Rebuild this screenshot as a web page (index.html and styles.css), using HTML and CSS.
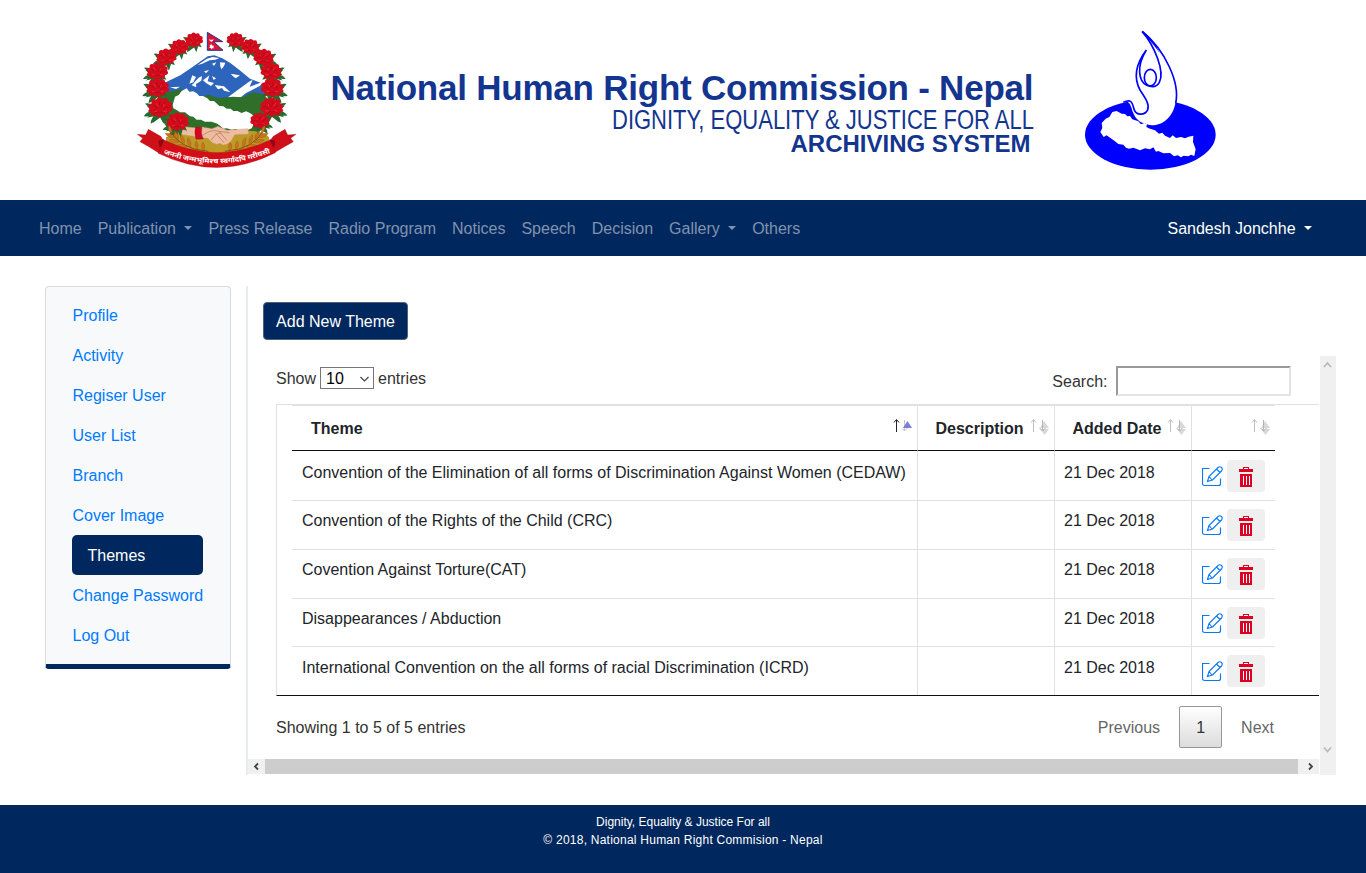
FILE: index.html
```html
<!DOCTYPE html>
<html lang="en">
<head>
<meta charset="utf-8">
<title>National Human Right Commission - Nepal</title>
<link rel="stylesheet" href="styles.css">
</head>
<body>
<svg class="defs" width="0" height="0">
  <defs>
    <g id="flower">
      <path fill="#246b2c" d="M-17 8l-17 15 22-5-8 18 19-14 8 16 6-20 12 3-8-15zM-20-3l-15-4 14 14zM-20 6q-15 1-22 13 17 2 26-7zM-12 14q-13 9-13 24 13-6 19-20zM-18-8q-10-8-21-5 8 11 20 10z"/>
      <path fill="#d20c1c" d="M-28 1q-8-11 5-14-2-14 12-10 6-10 16-2 13-5 14 7 14 2 8 13 8 11-6 13-2 13-14 8-9 11-17 1-14 4-14-7-12-1-4-9z"/>
      <path fill="none" stroke="#9c0512" stroke-width="1.500" d="M-18-8q7 1 9 9M-2-18q-4 9 5 13m10-11q-10 3-9 13m17 0q-10-3-15 5m3 11q-5-8-13-3m-15 5q7-9 14-7"/>
      <path fill="none" stroke="#f23641" stroke-width="2" d="M-12-14l6 8M9-12l-3 7M-16 8l8-2M15 6l-8 1"/>
    </g>
    <g id="wheat" fill="#cc741c" stroke="#8a4a10" stroke-width="1">
      <path fill="none" stroke-width="3" d="M118 312Q145 372 235 379"/>
      <path d="M116 301q14 12 8 25-12-10-8-25M106 325q19-2 25 13-18 1-25-13M134 318q14 11 11 25-14-9-11-25M118 345q19-6 30 7-18 7-30-7M153 329q14 14 9 27-14-12-9-27M139 361q20-8 33 5-18 8-33-5M174 338q13 14 7 28-13-12-7-28M163 375q20-9 35 1-17 10-35-1M198 348q11 13 3 25-11-11-3-25M188 383q18-10 36-5-17 12-36 5M219 352q10 13 1 25-10-12-1-25"/>
    </g>
    <g id="sort-both" fill="none">
      <path stroke="#bebec0" d="M4.500 14V2M2 4.500l2.500-3 2.500 3"/>
      <path fill="#d8d8da" d="M15 3l5 7h-9zM11 11h9l-4.500 6z"/>
      <path stroke="#b4b4b8" d="M13.500 2v11M10.500 10l3 3 3-3"/>
    </g>
    <g id="edit-icon" fill="none" stroke="#0878f9" stroke-width="1.150">
      <path d="M7.500 2.500h-7v15q0 2 2 2h14q2 0 2-2v-5"/>
      <path d="M5.500 15.500l1.500-5L16 1.500q2-1.500 3.500 0t0 3.500l-9 9zM7 10.500l3 3.500M14.500 3l3.500 3.500"/>
    </g>
    <g id="trash-icon">
      <path fill="#dc0022" d="M4 0h6v2h4v3H0V2h4zM1 7h12v13H1z"/>
      <path stroke="#fff" d="M4.500 9v9M7.500 9v9M10.500 9v9M5 1.500h4"/>
      <path stroke="#efefef" d="M0 6h14"/>
    </g>
  </defs>
</svg>

<header class="banner">
  <svg class="emblem" viewBox="0 0 525 450" role="img" aria-label="Emblem of Nepal">
    <path fill="#2d64bc" d="M98 176l53-25 42-29 40-28 20-3 24 9 25 15 30 23 28 23 35 14 13 34-20 30H116z"/>
    <path fill="#fff" d="M203 120l28-19 17-5 20 3-12 5-17 2-22 10zM246 116l13-4-7 11zM270 112l16 1-4 10-7 10-4-8zM222 139l15-4-9 10zM246 153l12 7-7 5zM302 146l28 5-13 9-8-6zM187 151l-9 25 12-4 8-16zM206 158l10-5-2 14-16 10 1 10-14-6zM219 166l19-15-5 18 19 5-9 9-14-8zM120 187l30-2-12 7zM254 180l28 4 19 18-19-5-6-8-12 4zM295 216l24-18 38-28 11-6-9 21 42-15-12 13-41 21-19 16-20 2-18 5z"/>
    <path fill="#2e7029" d="M87 211l22-10 45-8 26 5 31 18 25-7 28 10 45-4 27 2 34-15 32 5 14 20-6 72-46 45H135l-45-68z"/>
    <path fill="#fff" d="M128 240L135 215 146 210 155 198 170 190 178 200 190 199 200 205 208 213 219 213 232 220 240 228 252 228 268 243 280 244 290 251 302 251 310 258 322 258 335 264 348 259 360 264 368 270 370 290 368 308 355 314 345 312 335 320 318 312 305 314 290 310 280 311 272 304 262 296 245 290 225 290 213 284 200 284 190 275 180 274 165 262 150 262 140 255 130 250z"/>
    <path fill="#bd9a27" d="M108 337q22-12 54-10l97-4 100-5q40-1 58 19l-1 20q-150 80-308-5z"/>
    <path fill="#edbda0" stroke="#d38c78" d="M148 304l55 5 14-3 29 5 18-7 27 12 63-5 2 16-42 2-12 21-12 8-11 2-9-5-10 3-13-5-13-13-24-3-65-10z"/>
    <path fill="none" stroke="#b86d60" stroke-width="2" d="M218 331q26-20 48-12l32 4m-42 0l26 30m-15-34l24 28m-47-2q15-24 30-20"/>
    <path fill="#d20720" stroke="#8d0719" d="M197 306l19 1q-5 19 4 35l-22 1q-6-22-1-37z"/>
    <use href="#flower" transform="translate(193 48) scale(.88)"/><use href="#flower" transform="translate(149 69) scale(.92)"/>
    <use href="#flower" transform="translate(110 99) scale(1)"/><use href="#flower" transform="translate(83 142) scale(1.050)"/>
    <use href="#flower" transform="translate(84 192) scale(1.120)"/><use href="#flower" transform="translate(92 251) scale(1.200)"/>
    <use href="#flower" transform="translate(144 294) scale(1.100)"/>
    <use href="#flower" transform="translate(316 48) scale(-.88 .88)"/><use href="#flower" transform="translate(360 68) scale(-.92 .92)"/>
    <use href="#flower" transform="translate(400 100) scale(-1 1)"/><use href="#flower" transform="translate(423 142) scale(-1.050 1.050)"/>
    <use href="#flower" transform="translate(426 192) scale(-1.120 1.120)"/><use href="#flower" transform="translate(424 250) scale(-1.150 1.150)"/>
    <use href="#flower" transform="translate(389 290) scale(-.95 .95)"/>
    <use href="#wheat"/><use href="#wheat" transform="translate(520 0) scale(-1 1)"/>
    <path fill="#d81438" stroke="#23368d" stroke-width="3" d="M232 22l46 28h-27l28 26h-47z"/>
    <path fill="#fff" d="M237 41q7 7 14 0-2 9-7 9t-7-9M245 58l2 4 5 0-2 4 2 4-5 0-3 3-2-4-5-1 3-3-1-4z"/>
    <path fill="#cf1019" stroke="#8e0711" d="M22 328L47 330 55 313 92 334 103 350 88 385 58 366 30 350 38 340zM498 328L473 330 465 313 430 334 418 350 433 383 462 366 490 350 482 340z"/>
    <path fill="#8f0710" d="M85 347L102 343 100 362 88 367zM436 347L419 343 421 362 433 367z"/>
    <path fill="#d40d17" stroke="#8e0711" d="M102 345Q262 421 420 345L436 383Q262 471 85 385z"/>
    <path id="ribbon-line" fill="none" d="M97 385Q262 447 428 381"/>
    <text class="motto"><textPath href="#ribbon-line" textLength="328" lengthAdjust="spacingAndGlyphs" startOffset="4">जननी जन्मभूमिश्च स्वर्गादपि गरीयसी</textPath></text>
  </svg>
  <svg class="titles" viewBox="0 0 710 100" role="img" aria-label="National Human Right Commission - Nepal">
    <text class="title-main" x="2.500" y="40" textLength="703">National Human Right Commission - Nepal</text>
    <text class="title-tag" x="284" y="69" textLength="422" lengthAdjust="spacingAndGlyphs">DIGNITY, EQUALITY &amp; JUSTICE FOR ALL</text>
    <text class="title-sub" x="462.500" y="92" textLength="240" lengthAdjust="spacingAndGlyphs">ARCHIVING SYSTEM</text>
  </svg>
  <svg class="logo" viewBox="0 0 450 465" role="img" aria-label="Commission logo">
    <ellipse cx="226" cy="338" rx="196" ry="105" fill="#00f"/>
    <path fill="#fff" d="M203 30C270 75 300 158 304 215C304 275 272 309 230 310Q220 310 209 304C191 300 180 288 172 266C166 244 159 237 151 239L145 228L189 180L184 137L214 84z"/>
    <path fill="#fff" d="M76 330L82 318 80 303 92 290 103 285 112 270 125 267 140 275 150 276 157 283 165 282 172 292 190 298 198 307 208 303 216 306 214 315 225 320 240 325 252 335 262 332 270 341 285 348 293 340 303 348 318 345 330 349 341 344 355 341 354 360 362 382 358 402 348 398 340 403 326 401 318 406 308 400 297 403 285 393 265 394 250 387 243 389 235 376 225 382 210 379 195 385 175 377 162 380 153 377 145 368 130 366 118 356 105 347 95 340 86 345z"/>
    <g fill="none" stroke="#00f" stroke-width="5">
      <path d="M203 29C269 84 316 181 302 244"/>
      <path d="M201 28C239 71 270 150 253 181Q242 201 215 190C190 176 184 132 214 84M214 84C178 132 179 174 195 204C211 228 224 246 218 264C207 282 181 281 176 258C171 238 166 231 145 241"/>
      <ellipse cx="226" cy="167" rx="18" ry="25"/>
    </g>
    <path fill="#00f" d="M203 28q33 24 51 66-14-21-38-48z"/>
  </svg>
</header>

<nav class="navbar">
  <a>Home</a><a>Publication <i class="caret"></i></a><a>Press Release</a><a>Radio Program</a><a>Notices</a><a>Speech</a><a>Decision</a><a>Gallery <i class="caret"></i></a><a>Others</a>
  <a class="user">Sandesh Jonchhe <i class="caret"></i></a>
</nav>

<main class="page">
  <aside class="sidebar">
    <a>Profile</a><a>Activity</a><a>Regiser User</a><a>User List</a><a>Branch</a><a>Cover Image</a><a class="active">Themes</a><a>Change Password</a><a>Log Out</a>
  </aside>
  <section class="content">
    <button class="add">Add New Theme</button>
    <div class="scroller">
      <div class="pane">
        <div class="controls">
          <div class="length">Show <span class="select">10<svg width="9" height="6" viewBox="0 0 9 6"><path d="M.5 1l4 4 4-4" fill="none" stroke="#444" stroke-width="1.200"/></svg></span> entries</div>
          <label class="search"><span>Search:</span> <input type="text"></label>
        </div>
        <div class="table-wrap">
          <table>
            <colgroup><col class="c-theme"><col class="c-desc"><col class="c-date"><col class="c-act"></colgroup>
            <thead><tr>
              <th><div>Theme<svg class="sort" width="20" height="18"><path d="M4.500 14V2M2 4.500l2.500-3 2.500 3" fill="none" stroke="#222"/><path d="M12.500 2v11M10 10.500l2.500 2.500 3-3" fill="none" stroke="#c8c8cb"/><path d="M15.500 3l4.500 7h-9z" fill="#787ddd"/></svg></div></th>
              <th><div>Description<svg class="sort" width="20" height="18"><use href="#sort-both"/></svg></div></th>
              <th><div>Added Date<svg class="sort" width="20" height="18"><use href="#sort-both"/></svg></div></th>
              <th><div><svg class="sort" width="20" height="18"><use href="#sort-both"/></svg></div></th>
            </tr></thead>
            <tbody>
              <tr class="r1"><td>Convention of the Elimination of all forms of Discrimination Against Women (CEDAW)</td><td></td><td>21 Dec 2018</td><td><div class="actions"><svg class="edit" width="21" height="21"><use href="#edit-icon"/></svg><span class="trash"><svg width="14" height="20"><use href="#trash-icon"/></svg></span></div></td></tr>
              <tr class="r2"><td>Convention of the Rights of the Child (CRC)</td><td></td><td>21 Dec 2018</td><td><div class="actions"><svg class="edit" width="21" height="21"><use href="#edit-icon"/></svg><span class="trash"><svg width="14" height="20"><use href="#trash-icon"/></svg></span></div></td></tr>
              <tr class="r3"><td>Covention Against Torture(CAT)</td><td></td><td>21 Dec 2018</td><td><div class="actions"><svg class="edit" width="21" height="21"><use href="#edit-icon"/></svg><span class="trash"><svg width="14" height="20"><use href="#trash-icon"/></svg></span></div></td></tr>
              <tr class="r4"><td>Disappearances / Abduction</td><td></td><td>21 Dec 2018</td><td><div class="actions"><svg class="edit" width="21" height="21"><use href="#edit-icon"/></svg><span class="trash"><svg width="14" height="20"><use href="#trash-icon"/></svg></span></div></td></tr>
              <tr class="r5"><td>International Convention on the all forms of racial Discrimination (ICRD)</td><td></td><td>21 Dec 2018</td><td><div class="actions"><svg class="edit" width="21" height="21"><use href="#edit-icon"/></svg><span class="trash"><svg width="14" height="20"><use href="#trash-icon"/></svg></span></div></td></tr>
            </tbody>
          </table>
        </div>
        <div class="foot">
          <span>Showing 1 to 5 of 5 entries</span>
          <div class="pager"><span>Previous</span><span class="current">1</span><span>Next</span></div>
        </div>
        <div class="hbar">
          <svg width="17" height="15"><path d="M10 4.500L7 7.500l3 3" fill="none" stroke="#444" stroke-width="1.800"/></svg>
          <div class="thumb"></div>
          <svg width="21" height="15"><path d="M11 4.500l3 3-3 3" fill="none" stroke="#444" stroke-width="1.800"/></svg>
        </div>
      </div>
      <div class="vbar">
        <svg width="16" height="18"><path d="M4 11l3.500-4 3.500 4" fill="none" stroke="#b9b9b9" stroke-width="1.800"/></svg>
        <svg width="16" height="35"><path d="M4 7.500l3.500 4 3.500-4" fill="none" stroke="#b9b9b9" stroke-width="1.800"/></svg>
      </div>
    </div>
  </section>
</main>

<footer class="footer">
  <div>Dignity, Equality &amp; Justice For all</div>
  <div class="copyright">© 2018, National Human Right Commision - Nepal</div>
</footer>
</body>
</html>
```
FILE: styles.css
```css
* { box-sizing: border-box; }
body { margin: 0; background: #fff; color: #212529; font: 16px/24px "Liberation Sans", Arial, sans-serif; }
svg { display: block; flex: none; }
.defs { position: absolute; }

.banner { height: 200px; display: flex; align-items: flex-start; padding-left: 130px; }
.emblem { width: 175px; height: 150px; margin-top: 25px; }
.motto { font: bold 21px "Noto Sans", "Noto Sans Devanagari", sans-serif; fill: #fff; }
.titles { width: 710px; height: 100px; margin: 60px 0 0 23px; fill: #13358f; font-family: "Liberation Sans", Arial, sans-serif; overflow: visible; }
.title-main { font-size: 35px; font-weight: bold; }
.title-tag { font-size: 27px; }
.title-sub { font-size: 23.5px; font-weight: bold; }
.logo { width: 150px; height: 155px; margin: 22px 0 0 37px; }

.navbar { height: 56px; padding: 8px 46px 8px 31px; display: flex; background: #00285e; color: #8093ae; }
.navbar a { padding: 9px 8px 7px; white-space: nowrap; }
.navbar .user { margin-left: auto; color: #fff; }
.caret { display: inline-block; margin-left: 4px; vertical-align: 4px; border: 4.8px solid transparent; border-top-color: currentColor; border-bottom: 0; }

.page { display: flex; align-items: flex-start; padding: 30px 30px 30px 45px; height: 549px; }
.sidebar { width: 186px; height: 383px; padding: 8px 27px 0 26px; border: 1px solid #d6d9dd; border-bottom: 5px solid #00285e; border-radius: 4px; background: #f8f9fa; color: #007bff; }
.sidebar a { display: block; height: 40px; padding: 9px 0 7px .5px; white-space: nowrap; }
.sidebar .active { padding-left: 15.5px; background: #00285e; color: #fff; border-radius: 5px; }

.content { width: 1090px; height: 489px; margin-left: 15px; border-left: 2px solid #e9ecef; padding-top: 16px; }
.add { display: block; width: 145px; height: 38px; margin: 0 0 16px 15px; padding: 2px 0 0; background: #00285e; color: #fff; border: 1px solid #4e6175; border-radius: 4px; font: inherit; }
.scroller { display: flex; height: 419px; }
.pane { width: 1072px; }
.controls { height: 48px; padding: 10px 29px 0 28px; display: flex; justify-content: space-between; color: #333; }
.length { display: flex; height: 24px; gap: 4px; line-height: 26px; }
.select { display: flex; align-items: center; justify-content: space-between; width: 54px; height: 22px; margin-top: 1px; padding: 1px 4px 0 5px; border: 1px solid #777; color: #000; line-height: 24px; }
.search { display: flex; align-items: center; gap: 8.5px; height: 30px; }
.search span { padding-top: 2px; }
.search input { width: 175px; height: 30px; padding: 1px; border: 2px solid; border-color: #999 #e3e3e3 #e3e3e3 #999; background: #fff; }

.table-wrap { margin: 0 0 0 28px; width: 1043px; height: 292px; padding-left: 15px; border-top: 1px solid #dee2e6; border-left: 1px solid #dee2e6; border-bottom: 1px solid #111; }
table { width: 983px; table-layout: fixed; border-collapse: separate; border-spacing: 0; }
.c-theme { width: 625px; }
.c-desc, .c-date { width: 137px; }
.c-act { width: 84px; }
th { height: 46px; padding: 0; border-top: 1px solid #dee2e6; border-bottom: 1px solid #111; text-align: left; }
th div { display: flex; align-items: center; justify-content: space-between; height: 26px; padding: 2px 5px 0 19px; }
th + th div { padding: 2px 5px 0 17.5px; }
.sort { margin: -5px 0 0 auto; }
td { vertical-align: top; padding: 8px 0 0 10px; border-bottom: 1px solid #dee2e6; white-space: nowrap; }
th + th, td + td { border-left: 1px solid #dee2e6; }
td + td { padding-left: 9px; }
.r1 { height: 50px; }
.r2, .r3 { height: 49px; }
.r4, .r5 { height: 48px; }
.r1 td { padding-top: 10px; }
.r5 td { padding-top: 9px; border-bottom: 0; }
.actions { display: flex; height: 32px; padding-left: 1px; }
.r1 .actions, .r5 .actions { margin-top: -1px; }
.edit { margin-top: 6px; }
.trash { width: 38px; height: 32px; margin-left: 4px; padding: 7px 0 0 12px; border-radius: 4px; background: #efefef; }

.foot { display: flex; justify-content: space-between; height: 63px; padding: 10px 46px 0 28px; color: #333; line-height: 44px; }
.pager { display: flex; color: #666; }
.pager .current { width: 43px; height: 42px; margin: 0 19px; line-height: 42px; text-align: center; color: #333; border: 1px solid #979797; border-radius: 2px; background: linear-gradient(#fff, #dcdcdc); }
.hbar { display: flex; height: 15px; width: 1071px; background: #f0f0f0; }
.thumb { flex: 1; background: #cdcdcd; }
.vbar { width: 16px; height: 419px; display: flex; flex-direction: column; justify-content: space-between; background: #f0f0f0; }

.footer { height: 68px; padding-top: 8px; background: #00285e; color: #fff; text-align: center; font-size: 12px; line-height: 18px; }
.copyright { letter-spacing: .24px; }
```
